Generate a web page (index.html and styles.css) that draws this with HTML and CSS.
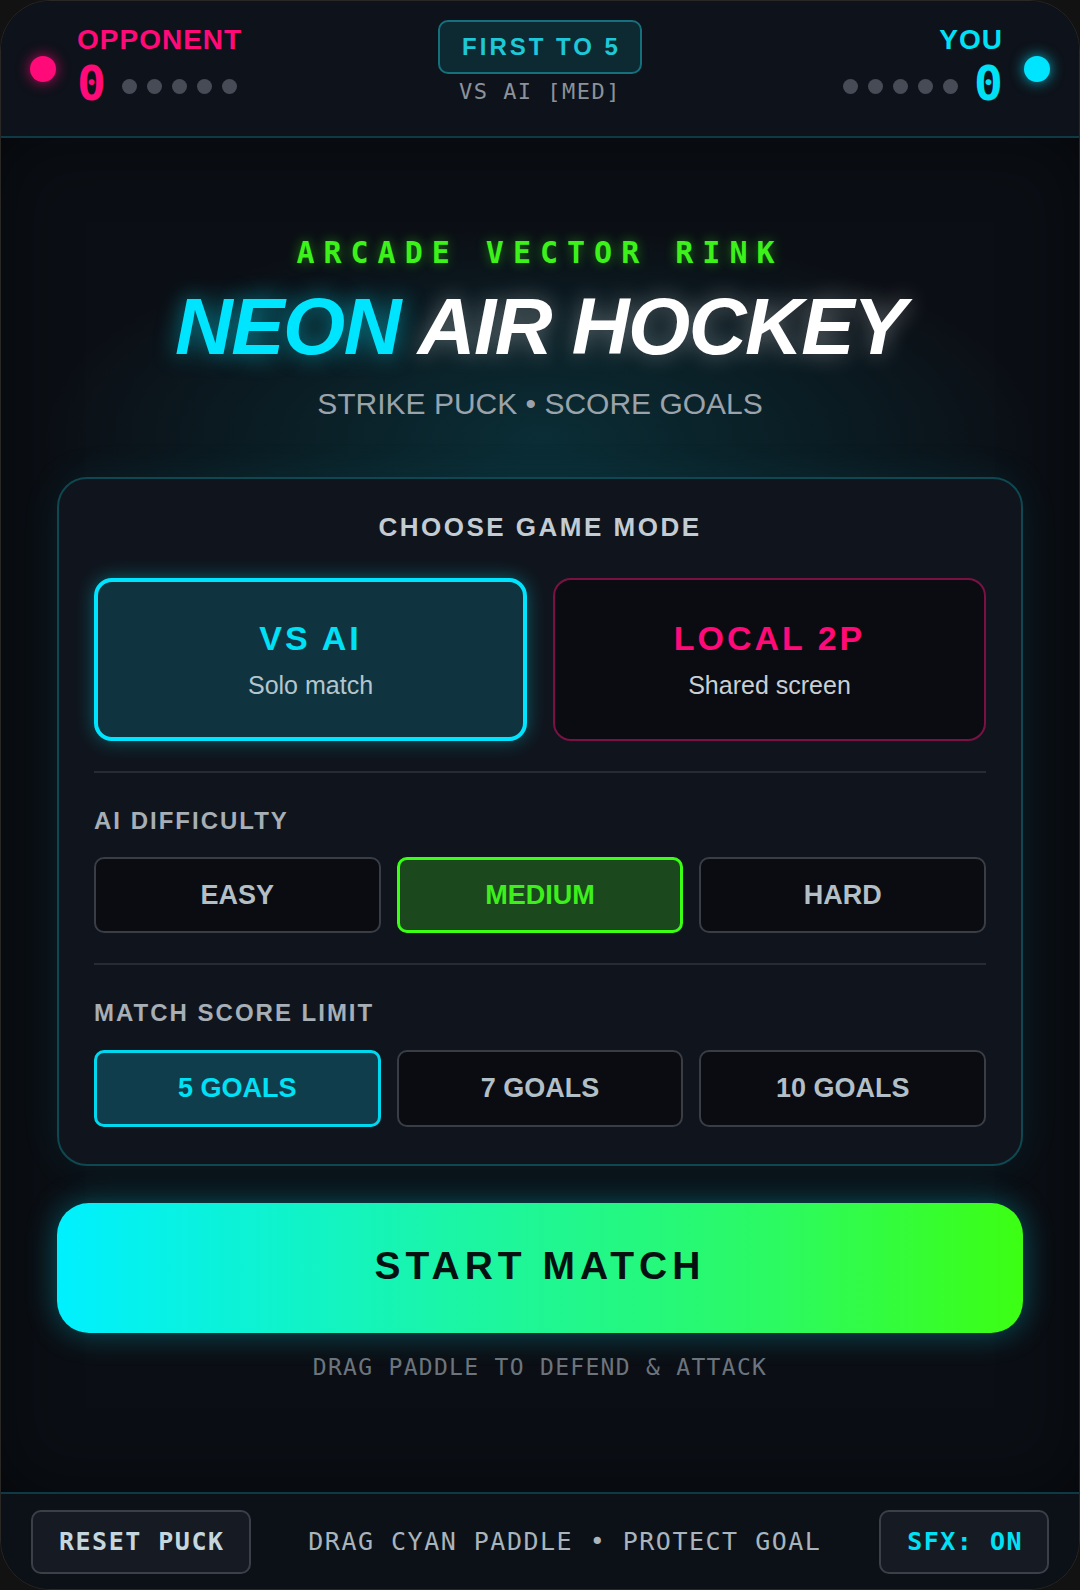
FILE: index.html
```html
<!DOCTYPE html>
<html lang="en">
<head>
    <meta charset="UTF-8">
    <meta name="viewport" content="width=device-width, initial-scale=1.0">
    <title>Neon Air Hockey</title>
    <link rel="stylesheet" href="styles.css">
</head>
<body>
    <div class="app">
        <header class="scorebar">
            <div class="side">
                <span class="puck-dot pink"></span>
                <div class="player">
                    <div class="player-name pink-text">OPPONENT</div>
                    <div class="score-row">
                        <span class="score pink-text">0</span>
                        <span class="pips"><i></i><i></i><i></i><i></i><i></i></span>
                    </div>
                </div>
            </div>

            <div class="match-info">
                <div class="target-pill">FIRST TO 5</div>
                <div class="match-sub">VS AI [MED]</div>
            </div>

            <div class="side side-right">
                <div class="player player-right">
                    <div class="player-name cyan-text">YOU</div>
                    <div class="score-row">
                        <span class="pips"><i></i><i></i><i></i><i></i><i></i></span>
                        <span class="score cyan-text">0</span>
                    </div>
                </div>
                <span class="puck-dot cyan"></span>
            </div>
        </header>

        <main class="menu">
            <div class="hero">
                <p class="eyebrow">ARCADE VECTOR RINK</p>
                <h1 class="title"><span class="neon">NEON</span> <span class="plain">AIR HOCKEY</span></h1>
                <p class="tagline">STRIKE PUCK &bull; SCORE GOALS</p>
            </div>

            <section class="setup-card">
                <h2 class="card-title">CHOOSE GAME MODE</h2>

                <div class="mode-grid">
                    <button class="mode-btn mode-ai active">
                        <span class="mode-name">VS AI</span>
                        <span class="mode-desc">Solo match</span>
                    </button>
                    <button class="mode-btn mode-local">
                        <span class="mode-name">LOCAL 2P</span>
                        <span class="mode-desc">Shared screen</span>
                    </button>
                </div>

                <div class="divider"></div>

                <h3 class="group-label">AI DIFFICULTY</h3>
                <div class="option-row">
                    <button class="opt-btn">EASY</button>
                    <button class="opt-btn opt-green">MEDIUM</button>
                    <button class="opt-btn">HARD</button>
                </div>

                <div class="divider"></div>

                <h3 class="group-label">MATCH SCORE LIMIT</h3>
                <div class="option-row option-row-last">
                    <button class="opt-btn opt-cyan">5 GOALS</button>
                    <button class="opt-btn">7 GOALS</button>
                    <button class="opt-btn">10 GOALS</button>
                </div>
            </section>

            <button class="start-btn">START MATCH</button>
            <p class="hint">DRAG PADDLE TO DEFEND &amp; ATTACK</p>
        </main>

        <footer class="controls">
            <button class="ctrl-btn">RESET PUCK</button>
            <span class="ctrl-help">DRAG CYAN PADDLE &bull; PROTECT GOAL</span>
            <button class="ctrl-btn ctrl-sfx">SFX: ON</button>
        </footer>
    </div>
</body>
</html>
```

FILE: styles.css
```css
*{
    box-sizing: border-box;
}

html, body{
    margin: 0;
    height: 100%;
    background: #121212;
}

body{
    font-family: "Liberation Sans", Arial, sans-serif;
    color: #c4ccd3;
}

.app{
    height: 1590px;
    display: flex;
    flex-direction: column;
    border: 1px solid #2a2824;
    border-radius: 50px;
    overflow: hidden;
    background: #0b0f15;
}

/* ---------- top score bar ---------- */

.scorebar{
    height: 137px;
    flex-shrink: 0;
    display: flex;
    align-items: center;
    justify-content: space-between;
    padding: 0 29px;
    background: #0e121a;
    border-bottom: 2px solid #0d3a44;
}

.side{
    display: flex;
    align-items: center;
    gap: 21px;
    width: 330px;
}

.side-right{
    justify-content: flex-end;
}

.puck-dot{
    width: 26px;
    height: 26px;
    border-radius: 50%;
}

.puck-dot.pink{
    background: #ff0a78;
    box-shadow: 0 0 14px rgba(255,10,120,.75);
}

.puck-dot.cyan{
    background: #00e5ff;
    box-shadow: 0 0 14px rgba(0,229,255,.75);
}

.player{
    padding-bottom: 4px;
}

.player-right{
    display: flex;
    flex-direction: column;
    align-items: flex-end;
}

.player-name{
    font-size: 28px;
    font-weight: bold;
    line-height: 1;
    letter-spacing: 1px;
}

.pink-text{ color: #ff0a78; }
.cyan-text{ color: #00e1f5; }

.score-row{
    display: flex;
    align-items: center;
    gap: 16px;
    margin-top: 5px;
}

.score{
    font-family: "DejaVu Sans Mono", monospace;
    font-weight: bold;
    font-size: 48px;
    line-height: 1;
}

.pips{
    display: flex;
    gap: 10px;
    padding-top: 6px;
}

.pips i{
    width: 15px;
    height: 15px;
    border-radius: 50%;
    background: #464b55;
}

.match-info{
    display: flex;
    flex-direction: column;
    align-items: center;
    padding-bottom: 14px;
}

.target-pill{
    height: 54px;
    padding: 0 19px 0 22px;
    border: 2px solid #15707d;
    border-radius: 10px;
    background: #0d2a33;
    color: #1ec8d8;
    font-size: 24px;
    font-weight: bold;
    letter-spacing: 3px;
    line-height: 50px;
}

.match-sub{
    margin-top: 7px;
    font-family: "DejaVu Sans Mono", monospace;
    font-size: 22px;
    line-height: 1;
    letter-spacing: 1.5px;
    color: #8b929b;
}

/* ---------- menu ---------- */

.menu{
    flex: 1;
    display: flex;
    flex-direction: column;
    align-items: center;
    padding: 100px 56px 0;
    background:
        radial-gradient(ellipse 500px 210px at 50% 300px, rgba(10,70,80,.55), rgba(10,70,80,0) 100%),
        #0b0f15;
    box-shadow: inset 0 0 70px rgba(0,0,0,.55);
}

.hero{
    text-align: center;
}

.eyebrow{
    margin: 0;
    font-family: "DejaVu Sans Mono", monospace;
    font-weight: bold;
    font-size: 30px;
    line-height: 1;
    letter-spacing: 9px;
    color: #3cf21a;
    text-shadow: 0 0 12px rgba(57,255,20,.45);
}

.title{
    margin: 19px 0 0;
    font-size: 80px;
    font-style: italic;
    font-weight: bold;
    line-height: 1;
    letter-spacing: -1.5px;
}

.title .neon{
    color: #00e5ff;
    text-shadow: 0 0 22px rgba(0,229,255,.55);
}

.title .plain{
    color: #ffffff;
    text-shadow: 0 0 22px rgba(255,255,255,.35);
}

.tagline{
    margin: 22px 0 0;
    font-size: 30px;
    line-height: 1;
    color: #9aa3ab;
}

/* ---------- setup card ---------- */

.setup-card{
    width: 100%;
    margin-top: 58px;
    padding: 35px 35px 37px;
    border: 2px solid #0f4850;
    border-radius: 30px;
    background: #10151d;
    box-shadow: 0 0 40px rgba(0,200,230,.08);
}

.card-title{
    margin: 0;
    text-align: center;
    font-size: 26px;
    line-height: 1;
    letter-spacing: 2.5px;
    color: #c4ccd3;
}

.mode-grid{
    display: grid;
    grid-template-columns: 1fr 1fr;
    gap: 26px;
    margin-top: 38px;
}

.mode-btn{
    height: 163px;
    display: flex;
    flex-direction: column;
    align-items: center;
    justify-content: center;
    gap: 18px;
    border-radius: 18px;
    font-family: inherit;
    cursor: pointer;
}

.mode-name{
    font-size: 34px;
    font-weight: bold;
    line-height: 1;
    letter-spacing: 3px;
}

.mode-desc{
    font-size: 25px;
    line-height: 1;
}

.mode-ai{
    border: 4px solid #00e5ff;
    background: #0f3440;
    box-shadow: 0 0 18px rgba(0,229,255,.35);
}

.mode-ai .mode-name{ color: #00e1f5; }
.mode-ai .mode-desc{ color: #b3c6ce; }

.mode-local{
    border: 2px solid #7c1044;
    background: #0a0c12;
}

.mode-local .mode-name{ color: #ff0a78; }
.mode-local .mode-desc{ color: #c8d0d6; }

.divider{
    height: 2px;
    margin: 30px 0 36px;
    background: #262c35;
}

.group-label{
    margin: 0;
    font-size: 24px;
    line-height: 1;
    letter-spacing: 2px;
    color: #a6aeb6;
}

.option-row{
    display: grid;
    grid-template-columns: repeat(3, 1fr);
    gap: 16px;
    margin-top: 24px;
}

.option-row-last{
    margin-top: 25px;
}

.opt-btn{
    height: 76px;
    border: 2px solid #383d46;
    border-radius: 10px;
    background: #0a0c12;
    color: #b3bfc7;
    font-family: inherit;
    font-size: 27px;
    font-weight: bold;
    cursor: pointer;
}

.option-row-last .opt-btn{
    height: 77px;
}

.opt-green{
    border: 3px solid #39ff14;
    background: #1b481d;
    color: #3df01c;
}

.opt-cyan{
    border: 3px solid #00d8f0;
    background: #0f3d4c;
    color: #00e1f5;
}

/* ---------- start ---------- */

.start-btn{
    width: 100%;
    height: 130px;
    margin-top: 37px;
    border: none;
    border-radius: 32px;
    background: linear-gradient(90deg, #00f0ff 0%, #1af5a8 40%, #2cfa60 75%, #3cff12 100%);
    box-shadow: 0 0 30px rgba(0,220,240,.35);
    color: #071010;
    font-family: inherit;
    font-size: 39px;
    font-weight: bold;
    letter-spacing: 5px;
    padding-bottom: 6px;
    cursor: pointer;
}

.hint{
    margin: 23px 0 0;
    font-family: "DejaVu Sans Mono", monospace;
    font-size: 23px;
    line-height: 1;
    letter-spacing: 1.3px;
    color: #6c757d;
}

/* ---------- bottom controls ---------- */

.controls{
    height: 97px;
    flex-shrink: 0;
    display: flex;
    align-items: center;
    justify-content: space-between;
    padding: 0 30px;
    background: #0c1118;
    border-top: 2px solid #0d3a44;
}

.ctrl-btn{
    height: 64px;
    padding: 0 24px 0 26px;
    border: 2px solid #3a3f48;
    border-radius: 10px;
    background: #151a23;
    color: #c4d6de;
    font-family: "DejaVu Sans Mono", monospace;
    font-size: 25px;
    font-weight: bold;
    letter-spacing: 1.5px;
    cursor: pointer;
}

.ctrl-sfx{
    color: #00e1f5;
}

.ctrl-help{
    font-family: "DejaVu Sans Mono", monospace;
    font-size: 25px;
    letter-spacing: 1.5px;
    color: #a9b4bc;
}
```
